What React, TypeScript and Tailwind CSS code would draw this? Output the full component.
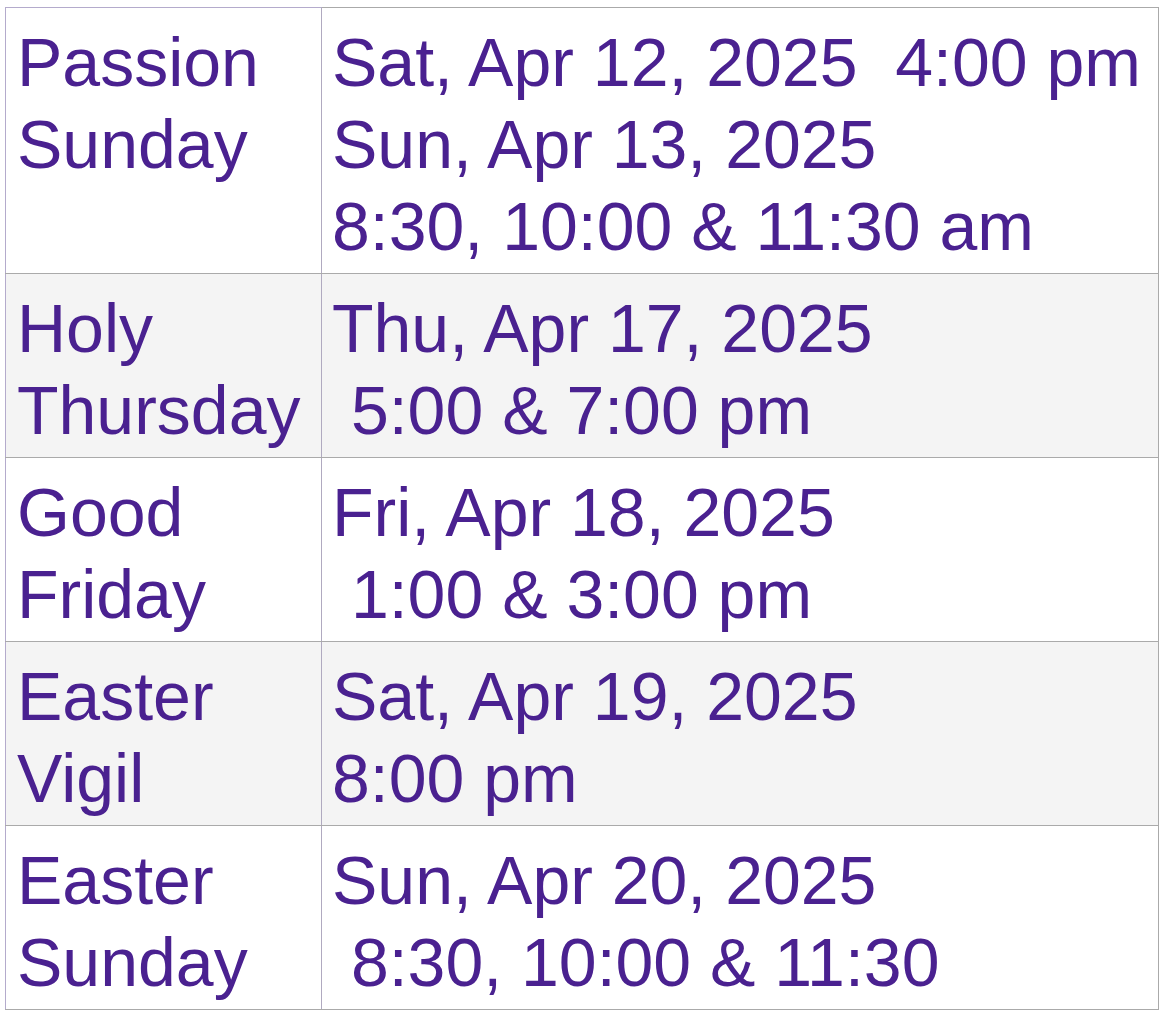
const rows = [
  { name: ["Passion", "Sunday"], lines: ["Sat, Apr 12, 2025  4:00 pm", "Sun, Apr 13, 2025", "8:30, 10:00 & 11:30 am"] },
  { name: ["Holy", "Thursday"], lines: ["Thu, Apr 17, 2025", " 5:00 & 7:00 pm"] },
  { name: ["Good", "Friday"], lines: ["Fri, Apr 18, 2025", " 1:00 & 3:00 pm"] },
  { name: ["Easter", "Vigil"], lines: ["Sat, Apr 19, 2025", "8:00 pm"] },
  { name: ["Easter", "Sunday"], lines: ["Sun, Apr 20, 2025", " 8:30, 10:00 & 11:30"] },
];

export default function App() {
  return (
    <div className="bg-white w-[1166px] h-[1018px] pt-[7px] pl-[5px]">
      <table
        className="border-collapse w-[1154px] text-[#4a2190] text-[68px] leading-[82px]"
        style={{ fontFamily: '"Liberation Sans", Arial, sans-serif' }}
      >
        <tbody>
          {rows.map((r, i) => (
            <tr key={i} className={i % 2 === 1 ? "bg-[#f4f4f4]" : "bg-white"}>
              <td className="w-[316px] align-top border border-[#b4abcc] border-b-[#aaaaaa] border-r-[#b0aac0] pl-[11px] pr-2 pt-[13px] pb-[6px]">
                {r.name.map((n) => (
                  <div key={n}>{n}</div>
                ))}
              </td>
              <td className="align-top border border-[#aaaaaa] pl-[10px] pr-2 pt-[13px] pb-[6px]">
                {r.lines.map((l) => (
                  <div key={l} className="whitespace-pre">
                    {l}
                  </div>
                ))}
              </td>
            </tr>
          ))}
        </tbody>
      </table>
    </div>
  );
}
